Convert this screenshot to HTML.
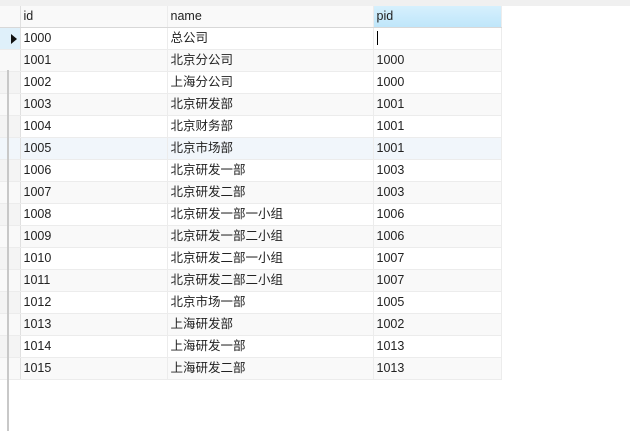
<!DOCTYPE html><html><head><style>
body{margin:0;width:630px;height:431px;background:#fff;position:relative;overflow:hidden;font-family:"Liberation Sans","Noto Sans CJK SC",sans-serif;font-size:12.5px;color:#222}
.top{position:absolute;left:0;top:0;width:630px;height:6px;background:#f0f0f0}
.vl{position:absolute;left:7px;top:70px;width:2px;height:361px;background:#c8c8c8}
table{position:absolute;left:0;top:6px;border-collapse:collapse;table-layout:fixed;width:501px}
td{height:21px;line-height:21px;padding:0 0 0 3px;border-right:1px solid #ececec;border-bottom:1px solid #ececec;white-space:nowrap;overflow:hidden;box-sizing:border-box}
tr{height:22px}
tr.h{height:21px}
td.i{padding:0;background:#f4f4f4;border-right:1px solid #e0e0e0;position:relative}
tr.h td{height:20px;line-height:20px;background:linear-gradient(#fff,#eef0f2);border-bottom:1px solid #d8d8d8}
tr.h td.p{background:linear-gradient(#d6f0fd,#bfe6fa)}
tr:nth-child(odd) td{background:#f9f9f9}
tr.s td{background:#f1f6fb}
.ar{position:absolute;left:11px;top:6px;width:0;height:0;border-left:6px solid #111;border-top:5px solid transparent;border-bottom:5px solid transparent}
</style></head><body>
<div class="top"></div>
<table>
<colgroup><col style="width:20px"><col style="width:147px"><col style="width:206px"><col style="width:128px"></colgroup>
<tr class="h"><td class="i"></td><td>id</td><td>name</td><td class="p">pid</td></tr>
<tr><td class="i" style="background:#dff0fa"><div class="ar"></div></td><td>1000</td><td>总公司</td><td><span style="display:inline-block;width:1px;height:14px;background:#000;vertical-align:middle"></span></td></tr>
<tr><td class="i"></td><td>1001</td><td>北京分公司</td><td>1000</td></tr>
<tr><td class="i"></td><td>1002</td><td>上海分公司</td><td>1000</td></tr>
<tr><td class="i"></td><td>1003</td><td>北京研发部</td><td>1001</td></tr>
<tr><td class="i"></td><td>1004</td><td>北京财务部</td><td>1001</td></tr>
<tr class="s"><td class="i"></td><td>1005</td><td>北京市场部</td><td>1001</td></tr>
<tr><td class="i"></td><td>1006</td><td>北京研发一部</td><td>1003</td></tr>
<tr><td class="i"></td><td>1007</td><td>北京研发二部</td><td>1003</td></tr>
<tr><td class="i"></td><td>1008</td><td>北京研发一部一小组</td><td>1006</td></tr>
<tr><td class="i"></td><td>1009</td><td>北京研发一部二小组</td><td>1006</td></tr>
<tr><td class="i"></td><td>1010</td><td>北京研发二部一小组</td><td>1007</td></tr>
<tr><td class="i"></td><td>1011</td><td>北京研发二部二小组</td><td>1007</td></tr>
<tr><td class="i"></td><td>1012</td><td>北京市场一部</td><td>1005</td></tr>
<tr><td class="i"></td><td>1013</td><td>上海研发部</td><td>1002</td></tr>
<tr><td class="i"></td><td>1014</td><td>上海研发一部</td><td>1013</td></tr>
<tr><td class="i"></td><td>1015</td><td>上海研发二部</td><td>1013</td></tr>
</table>
<div class="vl"></div>
</body></html>
